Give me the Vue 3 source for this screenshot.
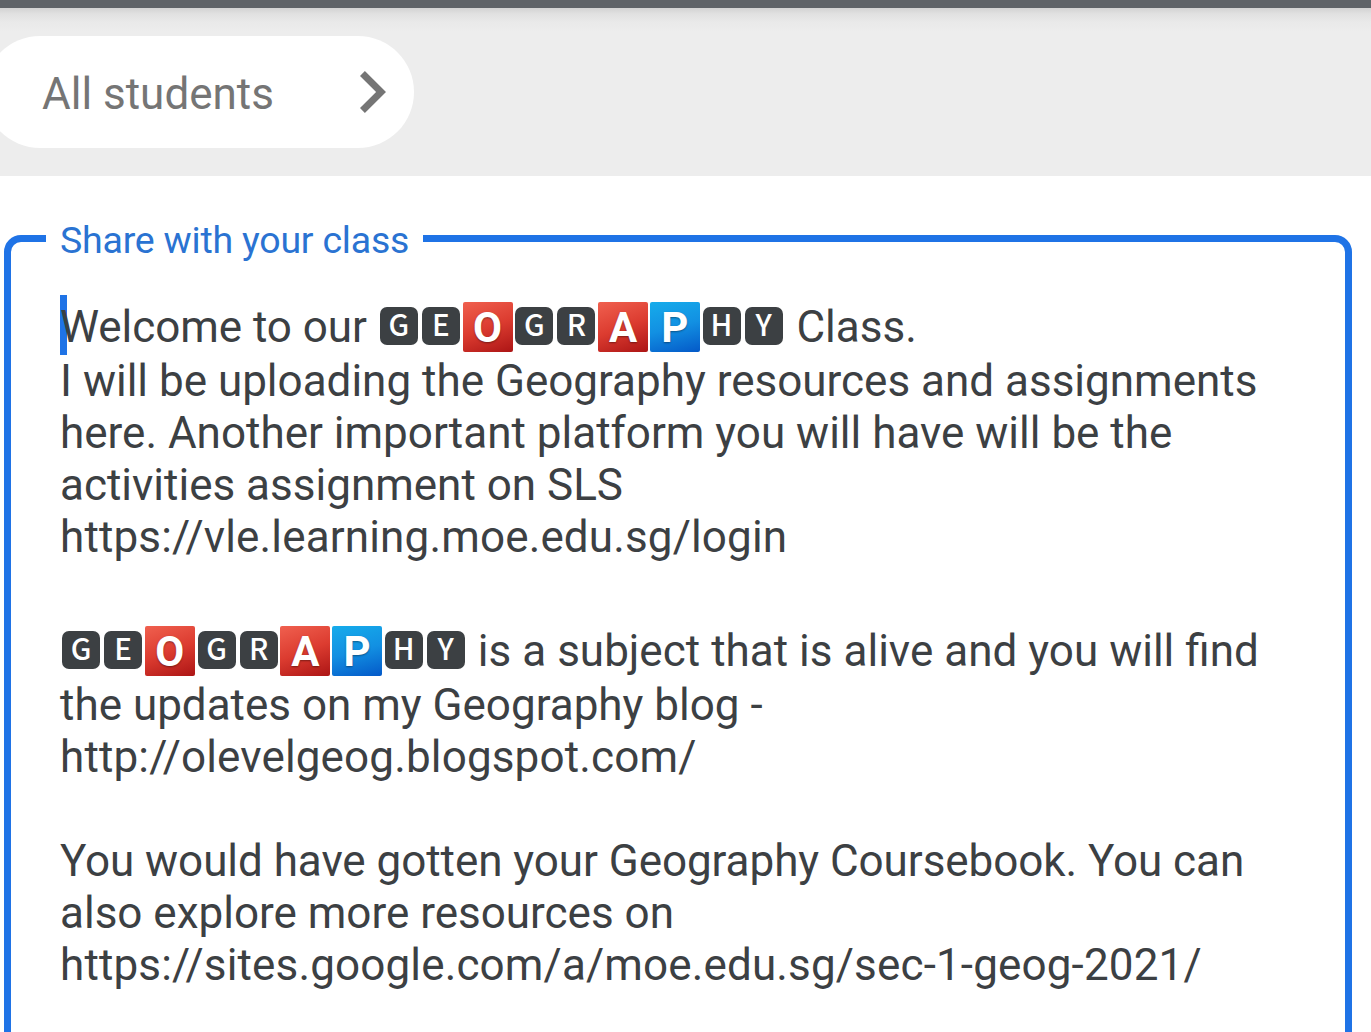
<script setup>
const word = [
  { char: 'G', kind: 'dark' },
  { char: 'E', kind: 'dark' },
  { char: 'O', kind: 'red' },
  { char: 'G', kind: 'dark' },
  { char: 'R', kind: 'dark' },
  { char: 'A', kind: 'red' },
  { char: 'P', kind: 'blue' },
  { char: 'H', kind: 'dark' },
  { char: 'Y', kind: 'dark' }
];

// Lines of the announcement, `tiles` marks where the GEOGRAPHY word goes
const lines = [
  { before: 'Welcome to our ', tiles: true, after: ' Class.', fit: 'tight' },
  { before: 'I will be uploading the Geography resources and assignments' },
  { before: 'here. Another important platform you will have will be the' },
  { before: 'activities assignment on SLS' },
  { before: 'https://vle.learning.moe.edu.sg/login', fit: 'link' },
  { before: '' },
  { before: '', tiles: true, after: ' is a subject that is alive and you will find' },
  { before: 'the updates on my Geography blog -' },
  { before: 'http://olevelgeog.blogspot.com/', fit: 'link' },
  { before: '' },
  { before: 'You would have gotten your Geography Coursebook. You can', fit: 'tight' },
  { before: 'also explore more resources on' },
  { before: 'https://sites.google.com/a/moe.edu.sg/sec-1-geog-2021/', fit: 'link' }
];
</script>

<template>
  <div class="screen">
    <div class="top-bar"></div>
    <div class="audience">
      <button class="chip">
        <span>All students</span>
        <svg class="chevron" width="26" height="42" viewBox="0 0 26 42">
          <path d="M0 4.9 4.9 0 26 21 4.9 42 0 37.1 16.1 21Z" fill="#757575" />
        </svg>
      </button>
    </div>

    <fieldset class="share-box">
      <legend>Share with your class</legend>
      <div class="message">
        <span class="cursor"></span>
        <div
          v-for="(line, index) in lines"
          :key="index"
          :class="['line', line.fit, { 'line-tall': line.tiles }]"
        ><span>{{ line.before }}</span><span v-if="line.tiles" class="word"><span
            v-for="(tile, i) in word"
            :key="i"
            :class="['tile', tile.kind]"
          >{{ tile.char }}</span></span><span v-if="line.after" class="after">{{ line.after }}</span></div>
      </div>
    </fieldset>
  </div>
</template>

<style>
body {
  margin: 0;
  background: #fff;
}
</style>

<style scoped>
.screen {
  display: flex;
  flex-direction: column;
  height: 1032px;
  overflow: hidden;
  background: #fff;
  font-family: Roboto, "Liberation Sans", sans-serif;
}

.top-bar {
  flex: none;
  height: 8px;
  background: #5f6368;
}

.audience {
  flex: none;
  box-sizing: border-box;
  height: 168px;
  padding-top: 28px;
  background: linear-gradient(#d3d3d3, #e1e1e1 6px, #e9e9e9 14px, #ededed 24px);
}

.chip {
  display: flex;
  align-items: center;
  justify-content: space-between;
  box-sizing: border-box;
  width: 430px;
  height: 112px;
  margin: 0 0 0 -16px;
  padding: 3px 28px 0 58px;
  border: none;
  border-radius: 56px;
  background: #fff;
  color: #757575;
  font-family: inherit;
  font-size: 44px;
}

.chevron {
  display: block;
  margin-top: -3px;
}

.share-box {
  flex: none;
  box-sizing: border-box;
  width: 1348px;
  height: 900px;
  margin: 41px 0 0 4px;
  padding: 0 0 0 49px;
  border: 7px solid #1f73e6;
  border-radius: 17px;
}

.share-box legend {
  height: 42px;
  margin-left: -14px;
  padding: 0 14px;
  color: #2a73d2;
  font-size: 37.5px;
  line-height: 46px;
  letter-spacing: -0.22px;
}

.message {
  position: relative;
  margin-top: 32px;
  color: #3c4043;
  font-size: 44px;
}

.line {
  height: 52px;
  line-height: 52px;
  white-space: pre;
}

.line-tall {
  padding: 10px 0 2px;
}

.link {
  letter-spacing: 0.15px;
}

.tight {
  letter-spacing: -0.05px;
}

.cursor {
  position: absolute;
  top: 4px;
  left: 0;
  width: 7px;
  height: 60px;
  background: #1f73e6;
}

.line span {
  position: relative;
}

.word {
  display: inline-flex;
  align-items: center;
  height: 50px;
  margin-top: 1px;
  vertical-align: top;
}

.after {
  letter-spacing: 0;
  word-spacing: 0.1px;
}

.tight .after {
  word-spacing: 1px;
}

.tile {
  box-sizing: border-box;
  width: 38px;
  height: 38px;
  margin: 0 2px 2px;
  border-radius: 7px;
  background: #3c4043;
  color: #fff;
  font-family: "Noto Sans CJK SC", "Noto Sans", sans-serif;
  font-size: 29.5px;
  font-weight: 500;
  line-height: 32px;
  letter-spacing: 0;
  text-align: center;
}

.word .red,
.word .blue {
  width: 50px;
  height: 50px;
  margin: 0 0.8px;
  border-radius: 2px;
  font-family: Roboto, "Liberation Sans", sans-serif;
  font-size: 42px;
  font-weight: bold;
  line-height: 52px;
  text-shadow: 0 1px 2px #0006;
}

.red {
  background: linear-gradient(160deg, #f0604f, #dc3c30 50%, #ac1515);
}

.blue {
  background: linear-gradient(165deg, #16aceb, #1290e2 50%, #0459c8);
}
</style>
